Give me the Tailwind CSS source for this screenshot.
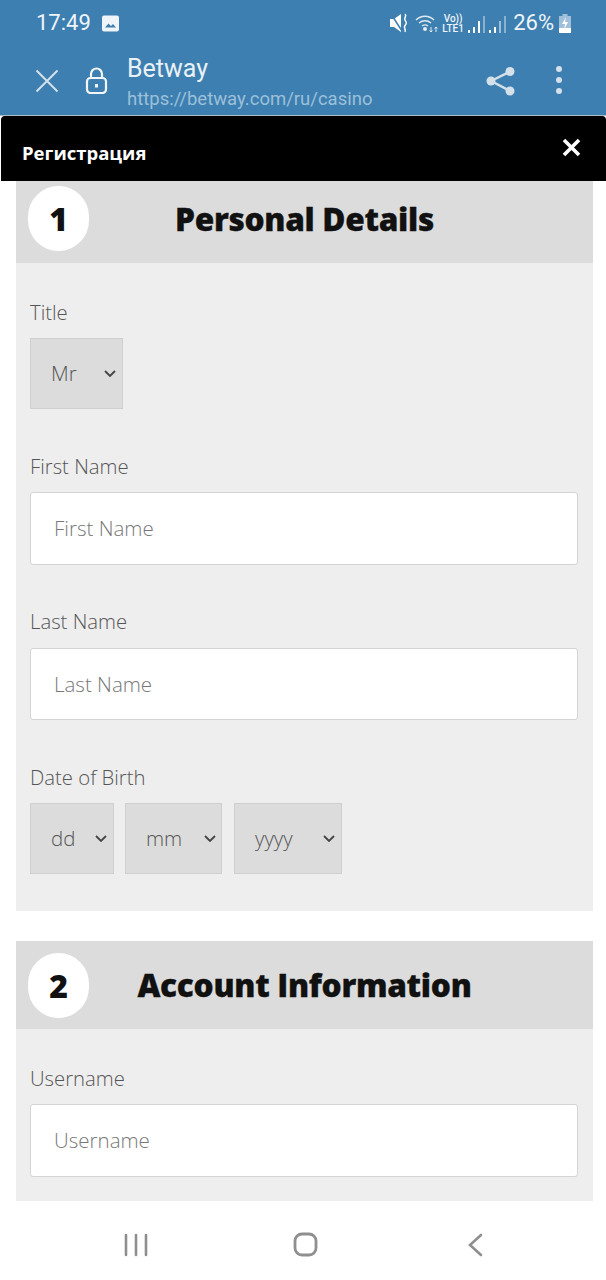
<!DOCTYPE html>
<html lang="en">
<head>
  <meta charset="UTF-8">
  <title>Betway</title>
  <script src="https://cdn.jsdelivr.net/npm/@tailwindcss/browser@4"></script>
</head>
<body class="bg-white font-['Roboto',sans-serif] w-[606px] h-[1280px] overflow-hidden relative">
  <!-- Status bar -->
  <div class="h-[46px] bg-[#3d7fb0] text-[#eef4f8] pl-[36px] pr-[35px] flex items-center justify-between">
    <div class="flex items-center gap-[11px]">
      <span class="text-[22px] leading-none">17:49</span>
      <svg class="w-[17px] h-[17px]" viewBox="0 0 17 17"><rect width="17" height="16" y="0.5" rx="2" fill="#eef4f8"/><path d="M3 12.5l3.5-4 2.5 2.5 2-2 3 3.5z" fill="#3d7fb0"/></svg>
    </div>
    <div class="flex items-center">
      <svg class="w-[18px] h-[20px] mr-[7px]" viewBox="0 0 18 20"><path d="M0 6h4l7-5v18l-7-5H0z" fill="#fff"/><path d="M1 1l11 17" stroke="#3d7fb0" stroke-width="1.500"/><path d="M15 1c2.500 2.500-1.500 3.500 0 6s2 3 0 5.500 1.500 3.500 0 6.500" stroke="#fff" stroke-width="1.500" fill="none"/></svg>
      <svg class="w-[24px] h-[19px] mr-[3px]" viewBox="0 0 24 19" fill="none" stroke="#dfeaf2" stroke-width="1.400"><path d="M1 6c5-5 13-5 18 0"/><path d="M4 9c3.500-3 8.500-3 12 0"/><path d="M7 12c2-1.500 4-1.500 6 0"/><circle cx="10" cy="15" r="1.300" fill="#fff"/><path d="M16 13v5M14.500 16.500l1.500 1.500 1.500-1.500M21 18v-5M19.500 14.500l1.500-1.500 1.500 1.500" stroke-width="1"/></svg>
      <div class="flex flex-col items-center text-[10px] leading-[10px] font-medium w-[22px] mr-[4px] mt-[1px]"><span>Vo))</span><span>LTE1</span></div>
      <div class="flex items-end gap-[3px] h-[18px] mr-[4px] mt-[1px]">
        <i class="block w-[2px] h-[3px] bg-white"></i><i class="block w-[2px] h-[6px] bg-white"></i><i class="block w-[2px] h-[12px] bg-white"></i><i class="block w-[2px] h-[17px] bg-white/40"></i>
      </div>
      <div class="flex items-end gap-[3px] h-[18px] mr-[7px] mt-[1px]">
        <i class="block w-[2px] h-[3px] bg-white"></i><i class="block w-[2px] h-[6px] bg-white"></i><i class="block w-[2px] h-[12px] bg-white/50"></i><i class="block w-[2px] h-[17px] bg-white/40"></i>
      </div>
      <span class="text-[22px] leading-none">26%</span>
      <svg class="w-[12px] h-[19px] ml-[5px]" viewBox="0 0 12 19"><rect x="3.500" width="5" height="2" fill="#9fc0d8"/><rect y="2" width="12" height="17" fill="#9fc0d8"/><rect y="14" width="12" height="5" fill="#fff"/><path d="M7 3L3 10h3l-1 6 4-8H6z" fill="#fff"/></svg>
    </div>
  </div>

  <!-- Browser bar -->
  <div class="h-[70px] bg-[#3d7fb0] flex items-center border-b border-[#a9bccb] relative">
    <svg class="w-[24px] h-[24px] ml-[35px]" viewBox="0 0 24 24" fill="none" stroke="#d3e1ec" stroke-width="2"><path d="M1.500 1.500l21 21M22.500 1.500l-21 21"/></svg>
    <svg class="w-[23px] h-[27px] ml-[26px]" viewBox="0 0 23 27" fill="none" stroke="#f2f6f9" stroke-width="2.200"><rect x="2" y="11" width="19" height="15" rx="3.500"/><path d="M6 11V7a5.500 5.500 0 0 1 11 0v4"/><path d="M11.500 17v3.500" stroke-width="3"/></svg>
    <div class="ml-[19px] mt-[3px] flex flex-col">
      <span class="text-[25px] leading-[30px] text-[#eaf1f6]">Betway</span>
      <span class="text-[18.500px] leading-[22px] text-[#9cc0da] mt-[4px]">https://betway.com/ru/casino</span>
    </div>
    <svg class="w-[30px] h-[30px] ml-auto mr-[40px]" viewBox="0 0 30 30" fill="#d5e1ea"><circle cx="24" cy="5.500" r="4.500"/><circle cx="5" cy="15" r="4.500"/><circle cx="24" cy="25" r="4.500"/><path d="M5 15L24 5.500M5 15l19 10" stroke="#d5e1ea" stroke-width="2.500"/></svg>
    <div class="flex flex-col gap-[5px] mr-[44px] mt-[-2px]">
      <i class="block w-[6px] h-[6px] rounded-full bg-[#d5e1ea]"></i><i class="block w-[6px] h-[6px] rounded-full bg-[#d5e1ea]"></i><i class="block w-[6px] h-[6px] rounded-full bg-[#d5e1ea]"></i>
    </div>
  </div>

  <!-- Modal header -->
  <div class="h-[65px] bg-black rounded-t-[4px] ml-px flex items-start justify-between pl-[21px] pr-[25px]">
    <span class="font-['Open_Sans',sans-serif] font-bold text-[18.500px] leading-[26px] text-white mt-[24px]">Регистрация</span>
    <svg class="w-[19px] h-[19px] mt-[22px]" viewBox="0 0 19 19" fill="none" stroke="#fff" stroke-width="3.600"><path d="M2 2l15 15M17 2L2 17"/></svg>
  </div>

  <!-- Form -->
  <div class="ml-[16px] mr-[13px] flex flex-col">
    <section class="bg-[#eeeeee] h-[730px]">
      <div class="h-[82px] bg-[#dcdcdc] relative flex items-center justify-center">
        <div class="absolute left-[12px] top-[5px] w-[61px] h-[65px] rounded-full bg-white flex items-center justify-center font-['Open_Sans',sans-serif] font-extrabold text-[32px] text-[#111]">1</div>
        <h2 class="font-['Open_Sans',sans-serif] font-extrabold text-[31.600px] leading-none text-[#111] mt-[-7px] tracking-[-0.300px] [-webkit-text-stroke:0.3px_#111]">Personal Details</h2>
      </div>
      <div class="pl-[14px] pr-[15px] pt-[36px] text-[#555]">
        <label class="block text-[20.300px] leading-[26px] font-['Open_Sans',sans-serif] font-light">Title</label>
        <div class="mt-[13px] w-[93px] h-[71px] bg-[#dcdcdc] border border-[#cfcfcf] flex items-center justify-between pl-[20px] pr-[6px] text-[20.500px] font-['Open_Sans',sans-serif] font-light">
          <span>Mr</span>
          <svg class="w-[12px] h-[7px]" viewBox="0 0 12 7" fill="none" stroke="#444" stroke-width="1.800"><path d="M1 1l5 5 5-5"/></svg>
        </div>
        <label class="block text-[20.300px] leading-[26px] font-['Open_Sans',sans-serif] font-light mt-[44px]">First Name</label>
        <div class="mt-[13px] h-[73px] bg-white border border-[#d4d4d4] rounded-[3px] flex items-center pl-[23px] text-[20.500px] text-[#777] font-['Open_Sans',sans-serif] font-light">First Name</div>
        <label class="block text-[20.300px] leading-[26px] font-['Open_Sans',sans-serif] font-light mt-[43px]">Last Name</label>
        <div class="mt-[14px] h-[72px] bg-white border border-[#d4d4d4] rounded-[3px] flex items-center pl-[23px] text-[20.500px] text-[#777] font-['Open_Sans',sans-serif] font-light">Last Name</div>
        <label class="block text-[20.300px] leading-[26px] font-['Open_Sans',sans-serif] font-light mt-[44px]">Date of Birth</label>
        <div class="mt-[13px] flex text-[20.500px] font-['Open_Sans',sans-serif] font-light">
          <div class="w-[84px] h-[71px] bg-[#dcdcdc] border border-[#cfcfcf] flex items-center justify-between pl-[20px] pr-[6px]">
            <span>dd</span>
            <svg class="w-[12px] h-[7px]" viewBox="0 0 12 7" fill="none" stroke="#444" stroke-width="1.800"><path d="M1 1l5 5 5-5"/></svg>
          </div>
          <div class="w-[97px] h-[71px] ml-[11px] bg-[#dcdcdc] border border-[#cfcfcf] flex items-center justify-between pl-[20px] pr-[5px]">
            <span>mm</span>
            <svg class="w-[12px] h-[7px]" viewBox="0 0 12 7" fill="none" stroke="#444" stroke-width="1.800"><path d="M1 1l5 5 5-5"/></svg>
          </div>
          <div class="w-[108px] h-[71px] ml-[12px] bg-[#dcdcdc] border border-[#cfcfcf] flex items-center justify-between pl-[20px] pr-[6px]">
            <span>yyyy</span>
            <svg class="w-[12px] h-[7px]" viewBox="0 0 12 7" fill="none" stroke="#444" stroke-width="1.800"><path d="M1 1l5 5 5-5"/></svg>
          </div>
        </div>
      </div>
    </section>
    <section class="bg-[#eeeeee] h-[260px] mt-[30px]">
      <div class="h-[88px] bg-[#dcdcdc] relative flex items-center justify-center">
        <div class="absolute left-[12px] top-[12px] w-[61px] h-[65px] rounded-full bg-white flex items-center justify-center font-['Open_Sans',sans-serif] font-extrabold text-[32px] text-[#111]">2</div>
        <h2 class="font-['Open_Sans',sans-serif] font-extrabold text-[31.600px] leading-none text-[#111] tracking-[-0.300px] [-webkit-text-stroke:0.3px_#111]">Account Information</h2>
      </div>
      <div class="pl-[14px] pr-[15px] pt-[36px] text-[#555]">
        <label class="block text-[20.300px] leading-[26px] font-['Open_Sans',sans-serif] font-light">Username</label>
        <div class="mt-[13px] h-[73px] bg-white border border-[#d4d4d4] rounded-[3px] flex items-center pl-[23px] text-[20.500px] text-[#777] font-['Open_Sans',sans-serif] font-light">Username</div>
      </div>
    </section>
  </div>

  <!-- Navigation bar, covers the form below it -->
  <div class="absolute left-0 right-0 bottom-0 h-[79px] bg-white flex items-start">
    <svg class="absolute left-[124px] top-[32px] w-[24px] h-[24px]" viewBox="0 0 24 24" fill="none" stroke="#8f8f8f" stroke-width="2.600" stroke-linecap="round"><path d="M2 2v20M12 2v20M22 2v20"/></svg>
    <svg class="absolute left-[293px] top-[31px] w-[25px] h-[25px]" viewBox="0 0 25 25" fill="none" stroke="#8f8f8f" stroke-width="2.800"><rect x="2" y="2" width="21" height="21" rx="7"/></svg>
    <svg class="absolute left-[467px] top-[32px] w-[16px] h-[24px]" viewBox="0 0 16 24" fill="none" stroke="#8f8f8f" stroke-width="2.600" stroke-linecap="round"><path d="M14 2L3 12l11 10"/></svg>
  </div>
</body>
</html>
